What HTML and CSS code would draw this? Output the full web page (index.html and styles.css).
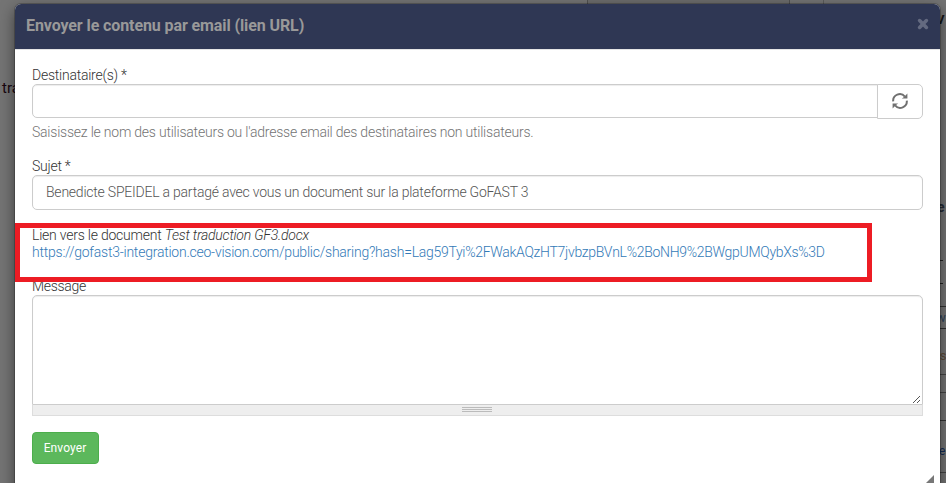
FILE: index.html
```html
<!DOCTYPE html>
<html lang="fr">
<head>
<meta charset="utf-8">
<title>GoFAST</title>
<link rel="stylesheet" href="styles.css">
</head>
<body>
<div class="page" aria-hidden="true">
  <span class="bg-tabs"></span>
  <span class="bg-word bg-left">tra</span>
  <span class="bg-word bg-v">V</span>
  <span class="bg-word bg-e">e</span>
  <span class="bg-rule r1"></span>
  <span class="bg-rule r2"></span>
  <span class="bg-rule r3"></span>
  <span class="bg-rule r4"></span>
  <span class="bg-word bg-w">w</span>
  <span class="bg-word bg-is">is</span>
  <span class="bg-rule r5"></span>
  <span class="bg-rule r6"></span>
  <span class="bg-rule r7"></span>
  <span class="bg-rule r8"></span>
  <span class="bg-word bg-link">e</span>
</div>
<section class="modal">
  <header class="modal-header">
    <h1>Envoyer le contenu par email (lien URL)</h1>
    <svg class="close" width="12" height="12" viewBox="0 0 12 12"><path d="M2.6 2.6L9.4 9.4M9.4 2.6L2.6 9.4"/></svg>
  </header>
  <form class="modal-body">
    <label><span class="t-dest">Destinataire(s) *</span></label>
    <div class="group">
      <div class="control control-first"></div>
      <div class="addon">
        <svg width="16" height="16" viewBox="0 0 16 16"><path class="arc" d="M1.2 8.4A6.6 6.6 0 0 1 12.9 3.6M14.8 7.6A6.6 6.6 0 0 1 3.1 12.4"/><path class="tip" d="M15.4.6V5.6H9.8L12 3.9 13.5 2.4ZM.6 15.4V10.4H6.2L4 12.1 2.5 13.6Z"/></svg>
      </div>
    </div>
    <p class="help"><span class="t-help">Saisissez le nom des utilisateurs ou l'adresse email des destinataires non utilisateurs.</span></p>
    <label><span class="t-subject">Sujet *</span></label>
    <div class="control subject"><span class="t-value">Benedicte SPEIDEL a partagé avec vous un document sur la plateforme GoFAST 3</span></div>
    <div class="document">
      <div><span class="t-doc">Lien vers le document <em>Test traduction GF3.docx</em></span></div>
      <a><span class="t-url">https://gofast3-integration.ceo-vision.com/public/sharing?hash=<span class="t-hash">Lag59Tyi%2FWakAQzHT7jvbzpBVnL%2BoNH9%2BWgpUMQybXs%3D</span></span></a>
      <span class="highlight"></span>
    </div>
    <label><span class="t-msg">Message</span></label>
    <div class="message">
      <svg width="9" height="9" viewBox="0 0 9 9"><path d="M1 8L8 1M5 8L8 5"/></svg>
    </div>
    <div class="grippie"><i></i><i></i><i></i></div>
    <button type="button" class="send">Envoyer</button>
  </form>
  <svg class="resize" width="10" height="10" viewBox="0 0 10 10"><path d="M9 1V10H0Z"/></svg>
</section>
</body>
</html>
```
FILE: styles.css
```css
* { box-sizing: border-box; }

body {
  margin: 0;
  height: 483px;
  overflow: hidden;
  position: relative;
  background: #747474;
  font: 300 14px/17px Roboto, sans-serif;
  color: #333;
}

/* Dimmed page behind the dialog */
.page { position: absolute; inset: 0; overflow: hidden; }
.bg-tabs { position: absolute; left: 587px; top: 0; width: 203px; height: 6px; background: #6c6c6c; border: solid #505050; border-width: 0 1px; }
.bg-tabs::after { content: ""; position: absolute; left: 235px; top: 0; width: 1px; height: 6px; background: #5c5c5c; }
.bg-word { position: absolute; font-weight: 400; color: #161616; }
.bg-left { left: 2px; top: 80px; font-size: 15px; color: #18060f; }
.bg-v { left: 936px; top: 11px; font-weight: 700; font-size: 13px; }
.bg-e { left: 937px; top: 199px; font-weight: 700; color: #252b35; }
.bg-w { left: 936px; top: 309px; font-size: 13px; color: #31445a; }
.bg-is { left: 937px; top: 347px; font-size: 13px; color: #5b4a38; letter-spacing: -.4px; }
.bg-link { left: 939px; top: 443px; font-size: 12px; color: #132c55; }
.bg-rule { position: absolute; left: 940px; width: 6px; height: 1px; background: #454545; }
.r1 { top: 260px; width: 3px; background: #222; }
.r2 { top: 283px; width: 3px; background: #222; }
.r3 { top: 306px; background: #333; }
.r4 { top: 328px; background: #2e2e2e; }
.r5 { top: 374px; }
.r6 { top: 392px; }
.r7 { top: 420px; background: #333; }
.r8 { top: 472px; }

.modal {
  position: relative;
  width: 925px;
  height: 500px;
  margin: 4px 0 0 15px;
  background: #fff;
  border-radius: 6px;
  box-shadow: 0 0 0 1px rgba(0, 0, 0, .2), 0 5px 15px rgba(0, 0, 0, .5);
}

.modal-header {
  height: 46px;
  display: flex;
  justify-content: space-between;
  align-items: flex-start;
  padding: 12px 11px 0;
  background: #2f3754;
  border-bottom: 1px solid #e5e5e5;
  border-radius: 6px 6px 0 0;
}
.modal-header h1 { margin: 0; font-size: 16px; line-height: 20px; font-weight: 700; letter-spacing: -.1px; color: #999; white-space: nowrap; }
.close { margin-top: 2px; fill: none; stroke: #646a80; stroke-width: 3.6; stroke-linecap: round; }

.modal-body { padding: 17px 17px 0; }
label, .help, .document div, .document a { display: block; height: 17px; margin: 0; white-space: nowrap; }
.help { margin: 5px 0 17px; color: #737373; }

.t-dest { letter-spacing: -.24px; }
.t-help { letter-spacing: -.22px; }
.t-subject { letter-spacing: -.25px; }
.t-value { letter-spacing: -.225px; }
.t-doc { letter-spacing: -.22px; }
.t-url { letter-spacing: -.235px; }
.t-hash { letter-spacing: -.3px; }
.t-msg { letter-spacing: -.3px; }

.group { display: flex; align-items: flex-start; }
.control {
  height: 35px;
  padding: 8px 13px;
  border: 1px solid #ccc;
  border-radius: 5px;
  background: #fff;
  box-shadow: inset 0 1px 1px rgba(0, 0, 0, .075);
  color: #555;
  white-space: nowrap;
}
.control-first { flex: 1; height: 34px; border-radius: 5px 0 0 5px; }
.addon {
  width: 46px;
  height: 35px;
  margin-left: -1px;
  display: flex;
  align-items: center;
  justify-content: center;
  padding: 0 0 1px;
  border: 1px solid #ccc;
  border-radius: 0 5px 5px 0;
  background: #fff;
}
.arc { fill: none; stroke: #707070; stroke-width: 2; }
.tip { fill: #707070; }

.document { position: relative; margin: 17px 0; }
.document a { color: #337ab7; }
.highlight { position: absolute; left: -17px; top: -4px; width: 857px; height: 59px; border: 5px solid #ed1c24; }

.message {
  height: 110px;
  display: flex;
  align-items: flex-end;
  justify-content: flex-end;
  border: 1px solid #ccc;
  border-radius: 5px 5px 0 0;
  box-shadow: inset 0 1px 1px rgba(0, 0, 0, .075);
}
.message svg { margin: 0 1px 0 0; fill: none; stroke: #555; stroke-width: 1; }
.grippie {
  height: 11px;
  display: flex;
  flex-direction: column;
  align-items: center;
  gap: 1px;
  padding: 2px 1px 0 0;
  background: #eee;
  border: 1px solid #ddd;
  border-top: 0;
}
.grippie i { width: 30px; height: 1px; background: #bbb; }

.send {
  display: block;
  width: 67px;
  height: 32px;
  margin-top: 16px;
  padding: 0 1px 0 0;
  border: 1px solid #4cae4c;
  border-radius: 4px;
  background: #5cb85c;
  color: #fff;
  font: 400 12px/18px Roboto, sans-serif;
  letter-spacing: .1px;
}
.resize { position: absolute; left: 910px; top: 470px; fill: #777; }
```
